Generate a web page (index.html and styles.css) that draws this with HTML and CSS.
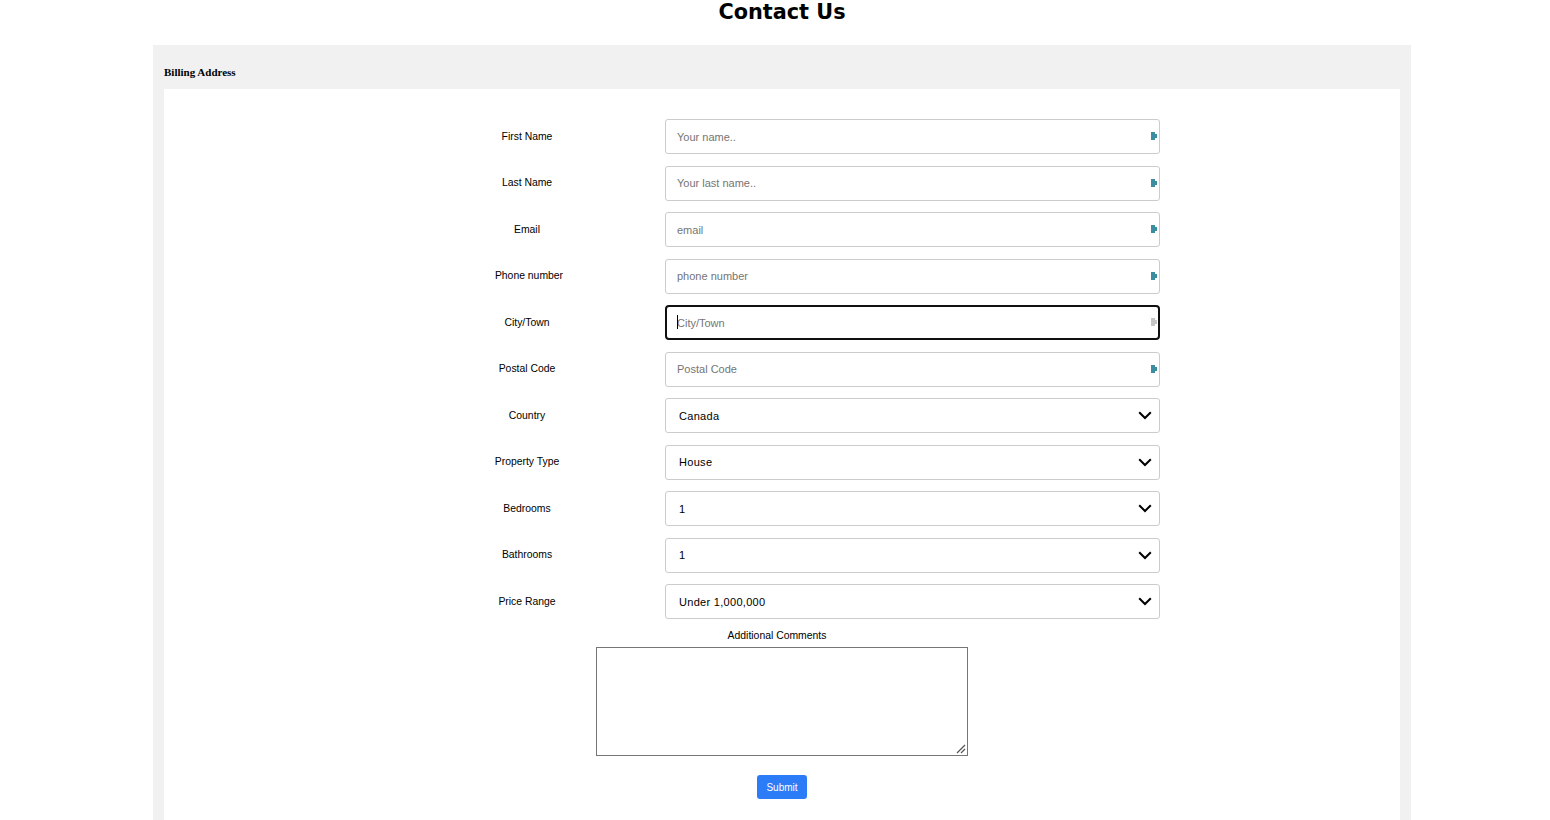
FILE: index.html
```html
<!DOCTYPE html>
<html>
<head>
<meta charset="utf-8">
<title>Contact Us</title>
<link rel="stylesheet" href="styles.css">
</head>
<body>
<h1 class="title">Contact Us</h1>
<div class="panel">
  <h4 class="panel-heading">Billing Address</h4>
  <div class="panel-body">
    <form class="form-grid">
      <label class="lbl">First Name</label>
      <div class="field"><input class="txt" type="text" placeholder="Your name.."><svg class="af" viewBox="0 0 6 8" width="6" height="8"><path d="M0 0h4v2h2v4h-2v2h-4z" fill="#3a8ea0"/></svg></div>

      <label class="lbl">Last Name</label>
      <div class="field"><input class="txt" type="text" placeholder="Your last name.."><svg class="af" viewBox="0 0 6 8" width="6" height="8"><path d="M0 0h4v2h2v4h-2v2h-4z" fill="#3a8ea0"/></svg></div>

      <label class="lbl">Email</label>
      <div class="field"><input class="txt" type="text" placeholder="email"><svg class="af" viewBox="0 0 6 8" width="6" height="8"><path d="M0 0h4v2h2v4h-2v2h-4z" fill="#3a8ea0"/></svg></div>

      <label class="lbl lbl-wide">Phone number</label>
      <div class="field"><input class="txt" type="text" placeholder="phone number"><svg class="af" viewBox="0 0 6 8" width="6" height="8"><path d="M0 0h4v2h2v4h-2v2h-4z" fill="#3a8ea0"/></svg></div>

      <label class="lbl">City/Town</label>
      <div class="field"><input class="txt focused" type="text" placeholder="City/Town"><span class="caret"></span><svg class="af" viewBox="0 0 6 8" width="6" height="8"><path d="M0 0h4v2h2v4h-2v2h-4z" fill="#c4c4c4"/></svg></div>

      <label class="lbl">Postal Code</label>
      <div class="field"><input class="txt" type="text" placeholder="Postal Code"><svg class="af" viewBox="0 0 6 8" width="6" height="8"><path d="M0 0h4v2h2v4h-2v2h-4z" fill="#3a8ea0"/></svg></div>

      <label class="lbl">Country</label>
      <div class="field"><select class="sel"><option>Canada</option></select><svg class="chev" viewBox="0 0 14 9" width="14" height="9"><path d="M1.2 1.2 7 7 12.8 1.2" fill="none" stroke="#000" stroke-width="2"/></svg></div>

      <label class="lbl">Property Type</label>
      <div class="field"><select class="sel"><option>House</option></select><svg class="chev" viewBox="0 0 14 9" width="14" height="9"><path d="M1.2 1.2 7 7 12.8 1.2" fill="none" stroke="#000" stroke-width="2"/></svg></div>

      <label class="lbl">Bedrooms</label>
      <div class="field"><select class="sel"><option>1</option></select><svg class="chev" viewBox="0 0 14 9" width="14" height="9"><path d="M1.2 1.2 7 7 12.8 1.2" fill="none" stroke="#000" stroke-width="2"/></svg></div>

      <label class="lbl">Bathrooms</label>
      <div class="field"><select class="sel"><option>1</option></select><svg class="chev" viewBox="0 0 14 9" width="14" height="9"><path d="M1.2 1.2 7 7 12.8 1.2" fill="none" stroke="#000" stroke-width="2"/></svg></div>

      <label class="lbl">Price Range</label>
      <div class="field"><select class="sel"><option>Under 1,000,000</option></select><svg class="chev" viewBox="0 0 14 9" width="14" height="9"><path d="M1.2 1.2 7 7 12.8 1.2" fill="none" stroke="#000" stroke-width="2"/></svg></div>
    </form>
    <div class="comments">
      <label class="comments-label">Additional Comments</label>
      <div class="comments-wrap">
        <textarea class="comments-box"></textarea>
        <svg class="grip" viewBox="0 0 12 12" width="12" height="12"><path d="M11 3 3 11M11 7 7 11" fill="none" stroke="#555" stroke-width="1.2"/></svg>
      </div>
      <button class="submit" type="button">Submit</button>
    </div>
  </div>
</div>
</body>
</html>
```

FILE: styles.css
```css
html, body {
  margin: 0;
  padding: 0;
  background: #fff;
}

body {
  width: 1564px;
  font-family: "Liberation Sans", Arial, sans-serif;
  color: #000;
}

.title {
  margin: 0;
  text-align: center;
  font-family: "DejaVu Sans", Verdana, sans-serif;
  font-weight: bold;
  font-size: 20.8px;
  line-height: 24px;
}

.panel {
  margin: 21px 0 0 153px;
  width: 1258px;
  box-sizing: border-box;
  padding: 0 11px;
  background: #f1f1f1;
}

.panel-heading {
  margin: 0;
  padding: 20px 0 10px;
  font-family: "Liberation Serif", "Times New Roman", serif;
  font-weight: bold;
  font-size: 11px;
  line-height: 14px;
}

.panel-body {
  background: #fff;
  padding: 30px 0 40px;
}

.form-grid {
  margin: 0 0 0 225px;
  width: 771px;
  display: grid;
  grid-template-columns: 276px 495px;
  grid-auto-rows: 35px;
  row-gap: 11.5px;
  align-items: center;
}

.lbl {
  text-align: center;
  font-size: 10.4px;
  line-height: 12px;
}

.lbl-wide {
  padding-left: 4px;
}

.field {
  position: relative;
  height: 35px;
}

.txt,
.sel {
  display: block;
  width: 100%;
  height: 35px;
  box-sizing: border-box;
  margin: 0;
  border: 1px solid #cccccc;
  border-radius: 3px;
  background: #fff;
  font-family: "Liberation Sans", Arial, sans-serif;
  font-size: 11px;
  color: #000;
  outline: none;
}

.txt {
  padding: 0 20px 0 11px;
}

.txt::placeholder {
  color: #757575;
}

.txt.focused {
  border: 2px solid #101010;
  border-radius: 4px;
  padding-left: 10px;
}

.caret {
  position: absolute;
  left: 12px;
  top: 10px;
  width: 1px;
  height: 14px;
  background: #000;
}

.af {
  position: absolute;
  right: 3px;
  top: 13px;
}

.sel {
  appearance: none;
  -webkit-appearance: none;
  padding: 0 30px 0 13px;
  letter-spacing: 0.3px;
}

.chev {
  position: absolute;
  right: 8px;
  top: 13px;
  pointer-events: none;
}

.comments {
  display: flex;
  flex-direction: column;
  align-items: center;
  margin-top: 11px;
}

.comments-label {
  font-size: 10.4px;
  line-height: 12px;
  margin-right: 10px;
}

.comments-wrap {
  position: relative;
  margin-top: 5px;
  width: 372px;
  height: 109px;
}

.comments-box {
  display: block;
  width: 372px;
  height: 109px;
  box-sizing: border-box;
  margin: 0;
  border: 1px solid #767676;
  border-radius: 0;
  padding: 2px;
  resize: none;
  font-family: "Liberation Sans", Arial, sans-serif;
  font-size: 11px;
}

.grip {
  position: absolute;
  right: 2px;
  bottom: 2px;
  pointer-events: none;
}

.submit {
  margin-top: 19px;
  width: 50px;
  height: 24px;
  border: none;
  border-radius: 3px;
  background: #2b7cf6;
  color: #fff;
  font-family: "Liberation Sans", Arial, sans-serif;
  font-size: 10px;
  padding: 0;
}
```
